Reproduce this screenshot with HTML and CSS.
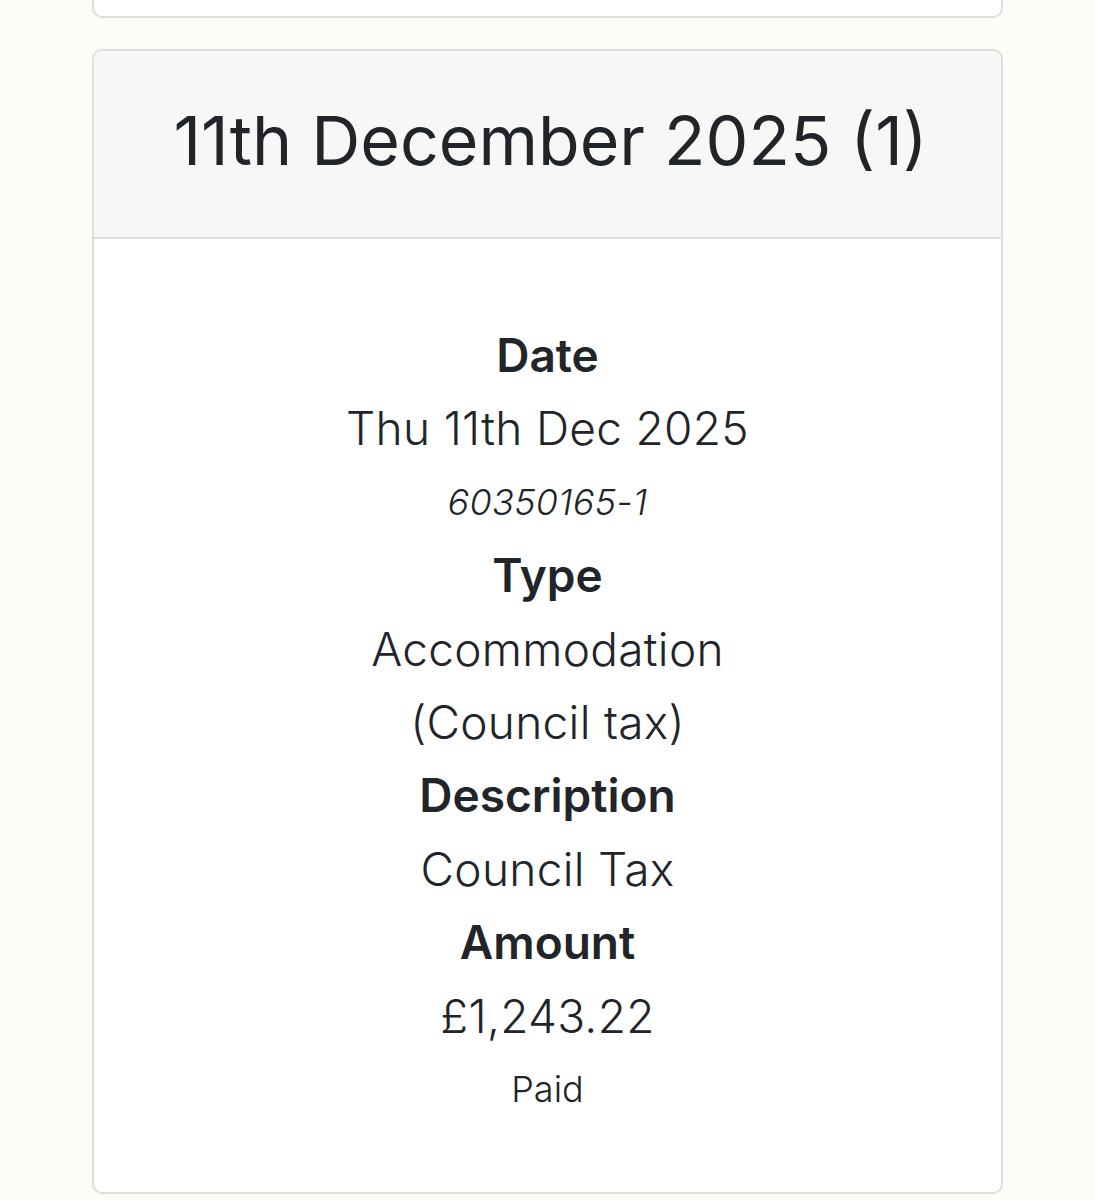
FILE: index.html
```html
<!DOCTYPE html>
<html lang="en">
<head>
  <meta charset="UTF-8" />
  <meta name="viewport" content="width=device-width, initial-scale=1.0"/>
  <title>Payments</title>
  <link rel="stylesheet" href="styles.css">
</head>
<body>

  <!-- previous day's card, scrolled mostly out of view -->
  <div class="card card-prev"></div>

  <div class="card">
    <div class="card-header">
      <h2>11th December 2025 (1)</h2>
    </div>
    <div class="card-body">
      <dl class="payment">
        <dt>Date</dt>
        <dd>Thu 11th Dec 2025</dd>
        <dd class="ref">60350165-1</dd>
        <dt>Type</dt>
        <dd>Accommodation<br>(Council tax)</dd>
        <dt>Description</dt>
        <dd>Council Tax</dd>
        <dt>Amount</dt>
        <dd>£1,243.22</dd>
        <dd class="status">Paid</dd>
      </dl>
    </div>
  </div>

</body>
</html>
```

FILE: styles.css
```css
body {
  font-family: 'Inter', 'Noto Sans', sans-serif;
  margin: 0;
  padding: 0 92px;
  background-color: #fdfdf8;
  color: #212529;
}

.card {
  background-color: #fff;
  border: 2px solid #dedede;
  border-radius: 10px;
  overflow: hidden;
  margin-bottom: 31px;
}

.card-prev {
  height: 60px;
  margin-top: -46px;
}

.card-header {
  background-color: #f7f7f7;
  border-bottom: 2px solid #dedede;
  height: 188px;
  box-sizing: border-box;
  padding-bottom: 8px;
  display: flex;
  align-items: center;
  justify-content: center;
}

.card-header h2 {
  margin: 0;
  font-size: 68px;
  font-weight: 400;
  padding-left: 6px;
}

.card-body {
  padding: 80px 20px 66px;
}

.payment {
  margin: 0;
  text-align: center;
  font-size: 46px;
  line-height: 73.4px;
}

.payment dt {
  font-weight: 600;
}

.payment dd {
  margin: 0;
  font-weight: 300;
  letter-spacing: 0.3px;
}

.payment .ref {
  font-style: italic;
  font-size: 36px;
}

.payment .status {
  font-size: 36px;
  letter-spacing: 0;
}
```
